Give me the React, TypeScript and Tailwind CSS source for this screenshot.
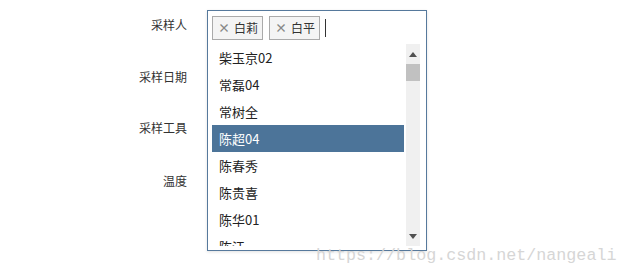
import React from "react";

const items = ["柴玉京02", "常磊04", "常树全", "陈超04", "陈春秀", "陈贵喜", "陈华01", "陈江"];

export default function App() {
  const font = { fontFamily: '"Microsoft YaHei", "Noto Sans CJK SC", sans-serif' };
  return (
    <div className="w-[627px] h-[276px] bg-white relative overflow-hidden" style={font}>
      <div className="flex pt-[10px]">
        <div className="w-[188px] flex flex-col items-end pr-[1px] text-[12px] text-[#333]">
          <div className="h-[30px] leading-[30px]">采样人</div>
          <div className="h-[30px] leading-[30px] mt-[22px]">采样日期</div>
          <div className="h-[30px] leading-[30px] mt-[21px]">采样工具</div>
          <div className="h-[30px] leading-[30px] mt-[23px]">温度</div>
        </div>
        <div className="ml-[19px] w-[220px] h-[241px] border border-[#56799c] bg-white flex flex-col shadow-[0_1px_3px_rgba(0,0,0,0.12)]">
          <div className="h-[33px] flex items-start pl-[4px] pt-[5px]">
            <div className="h-[24px] pl-[5px] pr-[4px] border border-[#aaa] bg-[#f4f4f4] flex items-center gap-[4px] text-[12px] text-[#333]">
              <span className="text-[#888] text-[12px] font-bold leading-none">×</span>
              <span>白莉</span>
            </div>
            <div className="ml-[6px] h-[24px] pl-[5px] pr-[4px] border border-[#aaa] bg-[#f4f4f4] flex items-center gap-[4px] text-[12px] text-[#333]">
              <span className="text-[#888] text-[12px] font-bold leading-none">×</span>
              <span>白平</span>
            </div>
            <div className="w-[1px] h-[18px] bg-[#333] mt-[3px] ml-[5px]"></div>
          </div>
          <div className="flex ml-[4px] mr-[6px] h-[202px] overflow-hidden">
            <div className="flex-1 flex flex-col">
              {items.map((it, i) => (
                <div
                  key={it}
                  className={
                    "h-[27px] shrink-0 leading-[27px] pl-[7px] text-[13px] " +
                    (i === 3 ? "bg-[#4c7499] text-white" : "text-[#222]")
                  }
                >
                  {it}
                </div>
              ))}
            </div>
            <div className="w-[14px] ml-[2px] bg-[#f0f0f0] flex flex-col items-center">
              <div className="h-[20px] w-full flex items-center justify-center">
                <svg width="8" height="5" viewBox="0 0 8 5"><path d="M0 5 L4 0 L8 5 Z" fill="#505050" /></svg>
              </div>
              <div className="w-[14px] h-[17px] bg-[#c1c1c1]"></div>
              <div className="flex-1"></div>
              <div className="h-[20px] w-full flex items-center justify-center">
                <svg width="8" height="5" viewBox="0 0 8 5"><path d="M0 0 L4 5 L8 0 Z" fill="#505050" /></svg>
              </div>
            </div>
          </div>
        </div>
      </div>
      <div
        className="absolute left-[316px] top-[248px] text-[16.7px] text-[#d6d6d6] leading-none"
        style={{ fontFamily: '"Liberation Mono", "DejaVu Sans Mono", monospace' }}
      >
        https://blog.csdn.net/nangeali
      </div>
    </div>
  );
}
